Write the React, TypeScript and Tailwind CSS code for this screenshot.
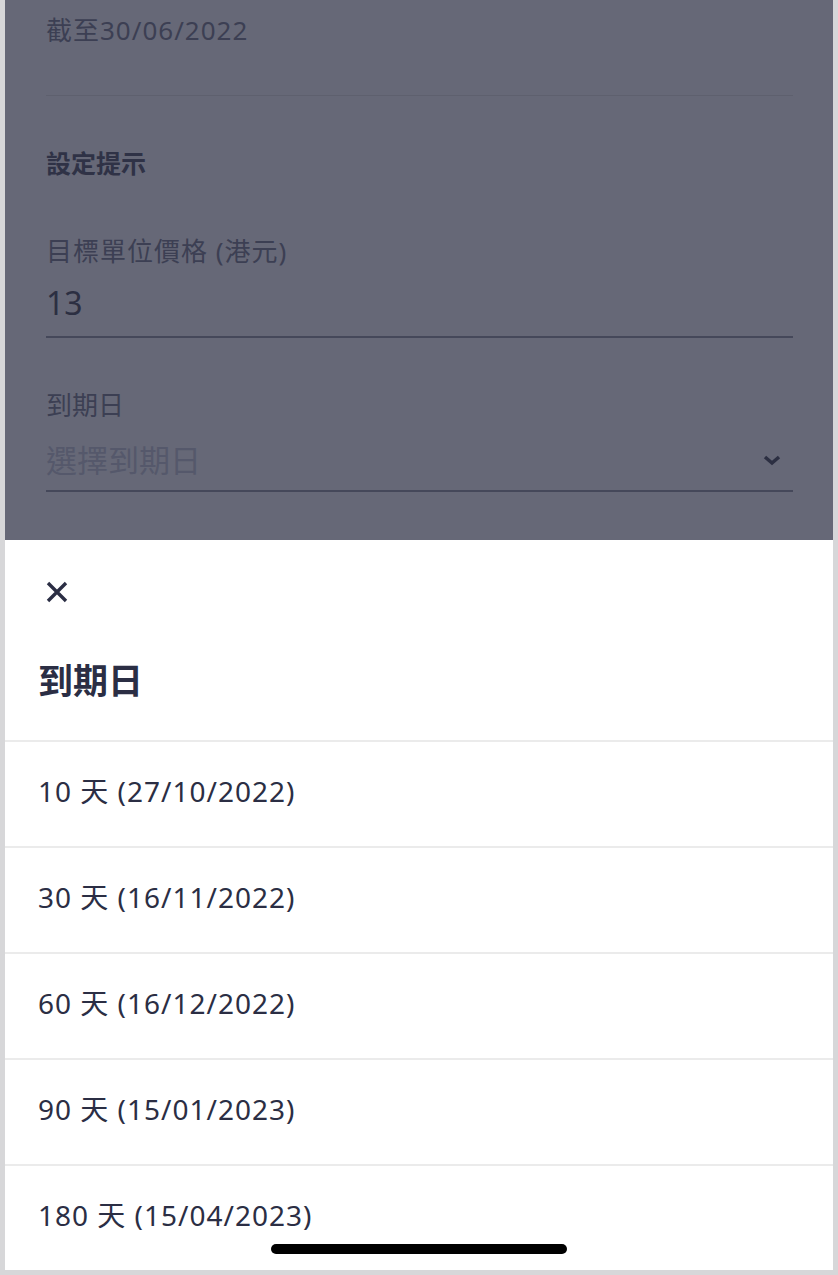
import React from "react";

const options = [
  "10 天 (27/10/2022)",
  "30 天 (16/11/2022)",
  "60 天 (16/12/2022)",
  "90 天 (15/01/2023)",
  "180 天 (15/04/2023)",
];

const font = { fontFamily: '"Noto Sans", "Noto Sans CJK TC", sans-serif' };

const App: React.FC = () => {
  return (
    <div
      className="w-[838px] h-[1275px] bg-[#d7d7d9] px-[5px] pb-[5px] flex flex-col overflow-hidden"
      style={font}
    >
      {/* Dimmed form behind the sheet */}
      <div className="h-[540px] shrink-0 bg-[#666877] pl-[41px] pr-[40px] flex flex-col">
        <p className="pt-[12px] text-[26px] leading-[36px] tracking-[1px] text-[#3c3f53]">截至30/06/2022</p>
        <div className="mt-[47px] h-px bg-[#5e606e]" />

        <p className="mt-[51px] text-[25px] leading-[32px] font-bold text-[#2f3246]">設定提示</p>

        <p className="mt-[54px] text-[26px] leading-[36px] tracking-[1px] text-[#3c3f53]">目標單位價格 (港元)</p>
        <p className="mt-[14px] text-[32px] leading-[40px] text-[#2c2f42]">13</p>
        <div className="mt-[13px] h-[2px] bg-[#45485a]" />

        <p className="mt-[51px] text-[26px] leading-[32px] text-[#3c3f53]">到期日</p>
        <div className="mt-[19px] flex items-center justify-between">
          <span className="text-[31px] leading-[40px] text-[#55586b]">選擇到期日</span>
          <svg width="18" height="12" viewBox="0 0 18 12" className="mr-[12px]">
            <path d="M2 3 L9 9 L16 3" fill="none" stroke="#2c2f42" strokeWidth="3.5" />
          </svg>
        </div>
        <div className="mt-[10px] h-[2px] bg-[#45485a]" />
      </div>

      {/* Bottom sheet */}
      <div className="relative flex-1 bg-white flex flex-col overflow-hidden">
        <div className="pl-[41px] pt-[41px]">
          <svg width="22" height="22" viewBox="0 0 22 22">
            <path d="M2 2 L20 20 M20 2 L2 20" stroke="#2b2e44" strokeWidth="3.4" fill="none" />
          </svg>
        </div>
        <h2 className="mt-[56px] pl-[33px] text-[35px] leading-[44px] font-bold text-[#2b2e44]">到期日</h2>
        <div className="mt-[37px] flex flex-col">
          {options.map((o) => (
            <div key={o} className="h-[106px] border-t-2 border-[#ebebeb] pl-[33px] pb-[6px] flex items-center">
              <span className="text-[28px] leading-[36px] tracking-[1px] text-[#2b2e44]">{o}</span>
            </div>
          ))}
        </div>
        <div className="absolute left-[266px] top-[704px] w-[296px] h-[10px] rounded-full bg-black" />
      </div>
    </div>
  );
};

export default App;
